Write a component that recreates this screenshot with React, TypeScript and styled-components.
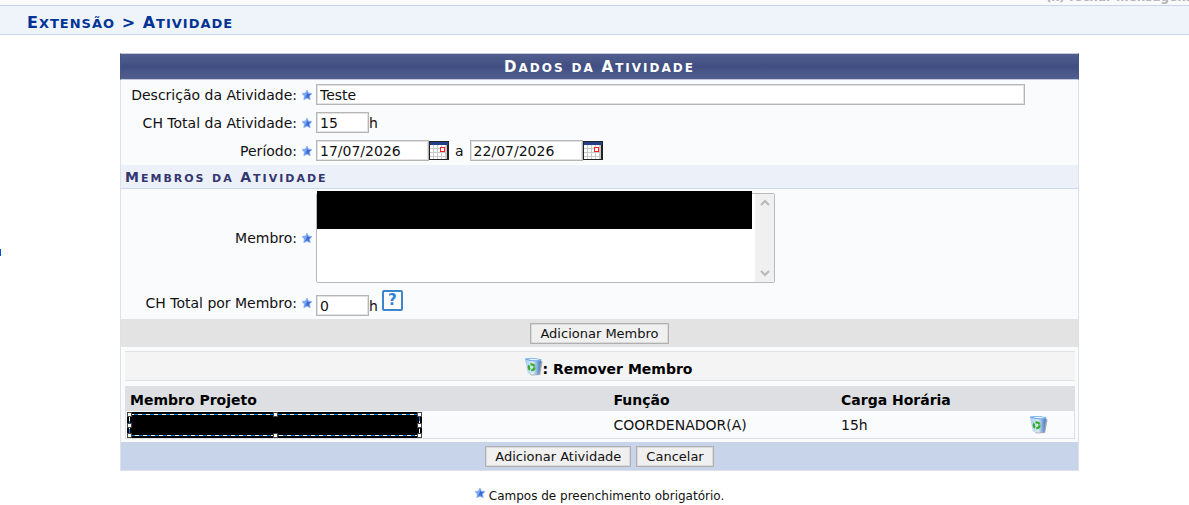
import React, { useId } from "react";
import styled, { createGlobalStyle } from "styled-components";

const GlobalStyle = createGlobalStyle`
  * { box-sizing: border-box; }
  body {
    margin: 0;
    background: #fff;
    color: #111;
    font: 14px/16px Verdana, "DejaVu Sans", sans-serif;
  }
  button, input, select { font: inherit; color: inherit; }
`;

const MessageStrip = styled.div`
  display: flex;
  justify-content: flex-end;
  align-items: flex-end;
  height: 5px;
  padding-bottom: 1px;
  overflow: hidden;
  background: #f9fafb;
`;

const CloseLink = styled.a`
  flex: none;
  width: 143px;
  color: #b4b4b4;
  font-size: 12px;
  font-weight: bold;
  line-height: 14px;
  white-space: nowrap;
  text-decoration: none;
`;

const LowerWord = styled.span<{ $small: number }>`
  font-size: ${(p) => p.$small}px;
  text-transform: uppercase;
`;

const Word = styled(LowerWord)`
  display: inline-block;

  &::first-letter { font-size: ${(p) => p.$small + 3}px; }
`;

const Breadcrumb = styled.h2`
  margin: 0;
  padding: 0 27px;
  height: 30px;
  border: solid #c8d5ec;
  border-width: 1px 0;
  background: #eff3fa;
  color: #003395;
  font-size: 16px;
  line-height: 34px;
  letter-spacing: 1px;
`;

const SideMark = styled.span`
  position: absolute;
  left: 0;
  top: 249px;
  width: 1px;
  height: 7px;
  background: #0050d0;
`;

const Main = styled.main`
  padding: 18px 110px 0 120px;
`;

const Panel = styled.form`
  border: 1px solid #dfe1e8;
  background: #fafbfd;
`;

const PanelTitle = styled.h3`
  margin: -1px;
  height: 27px;
  border: 1px solid #c4c8d8;
  border-left-color: #475486;
  border-right-color: #475486;
  background: linear-gradient(#515f8f, #414e82 50%, #515f8f);
  color: #fff;
  font-size: 14px;
  line-height: 26px;
  text-align: center;
  letter-spacing: 2px;
`;

const Fields = styled.div<{ $pad: string }>`
  display: flex;
  flex-direction: column;
  gap: 7px;
  padding: ${(p) => p.$pad};
`;

const Row = styled.div`
  display: flex;
  align-items: center;
`;

const Label = styled.label`
  flex: none;
  width: 176px;
  text-align: right;
  white-space: nowrap;
`;

const StarSlot = styled.span`
  flex: none;
  display: flex;
  width: 19px;
  padding-left: 5px;
`;

const Controls = styled.div`
  display: flex;
  flex: 1;
  align-items: flex-end;
`;

const TextInput = styled.input<{ $width: string }>`
  width: ${(p) => p.$width};
  height: 21px;
  padding: 0 3px;
  border: 1px solid #b5b5b5;
  border-radius: 0;
  box-shadow: inset 0 0 0 1px #e2e2e2;
  background: #fff;
`;

const Unit = styled.span`
  line-height: 19px;
`;

const Between = styled(Unit)`
  padding: 0 6px;
`;

const IconButton = styled.button`
  display: flex;
  flex: none;
  margin: 0;
  padding: 0;
  border: 0;
  background: none;
`;

const DateButton = styled(IconButton)`
  align-self: center;
`;

const HelpButton = styled.button`
  width: 21px;
  height: 21px;
  margin: 0 0 5px 4px;
  padding: 0;
  border: 2px solid #3d86cc;
  border-radius: 2px;
  background: #fff;
  color: #2f80d8;
  font-size: 15px;
  font-weight: bold;
  line-height: 17px;
`;

const SectionTitle = styled.h4`
  margin: 0;
  padding: 0 4px;
  height: 24px;
  border-bottom: 1px solid #c8d9ee;
  background: #ecf0f8;
  color: #33366f;
  font-size: 13px;
  line-height: 24px;
  letter-spacing: 2px;
`;

const ListFrame = styled.div`
  position: relative;
  display: flex;
  width: 459px;
  height: 90px;
  border: 1px solid #b9b9b9;
  border-radius: 2px;
  background: #fff;
`;

const ListBox = styled.select`
  flex: 1;
  border: 0;
  background: #fff;
  appearance: none;
  overflow: hidden;
`;

const ScrollTrack = styled.span`
  display: flex;
  flex-direction: column;
  justify-content: space-between;
  align-items: center;
  width: 19px;
  padding: 5px 0;
  background: #f0f0f0;
`;

const ListMask = styled.span`
  position: absolute;
  left: 0;
  top: -3px;
  width: 435px;
  height: 38px;
  background: #000;
`;

const ActionBar = styled.div<{ $tone: string }>`
  display: flex;
  justify-content: center;
  gap: 5px;
  padding: 4px 0 3px;
  background: ${(p) => p.$tone};
`;

const ActionButton = styled.button`
  height: 21px;
  padding: 0 9px;
  border: 1px solid #b0b0b0;
  box-shadow: inset 0 0 0 1px #dadada;
  background: #f0f0f0;
  font-size: 13px;
`;

const Members = styled.section`
  padding: 4px 3px 3px 4px;
`;

const Legend = styled.div`
  display: flex;
  justify-content: center;
  align-items: center;
  height: 30px;
  margin-bottom: 5px;
  padding-left: 16px;
  border: solid #e2e2e2;
  border-width: 1px 0;
  background: #f4f4f4;
  color: #000;
  font-weight: bold;

  span { padding-top: 6px; }
`;

const MemberTable = styled.table`
  width: 100%;
  border: 1px solid #dedfe3;
  border-collapse: separate;
  border-spacing: 0;
  table-layout: fixed;

  th {
    height: 24px;
    padding: 1px 4px 0;
    background: #dedfe3;
    color: #000;
    text-align: left;
  }
  td {
    height: 27px;
    padding: 0 4px;
  }
  td:first-child { padding: 1px 0 0 1px; vertical-align: bottom; }
  td:last-child { padding: 0 2px; }
`;

const Col = styled.col<{ $width: string }>`
  width: ${(p) => p.$width};
`;

const Note = styled.p`
  display: flex;
  justify-content: center;
  gap: 4px;
  margin: 17px 0 0;
  font-size: 12px;
  line-height: 17px;
`;

const Block = styled.svg`
  display: block;
  flex: none;
`;

function SmallCaps({ text, small }: { text: string; small: number }) {
  return (
    <>
      {text.split(" ").map((word, i) => (
        <React.Fragment key={i}>
          {i > 0 && " "}
          {/^[a-z]/.test(word) ? (
            <LowerWord $small={small}>{word}</LowerWord>
          ) : (
            <Word $small={small}>{word}</Word>
          )}
        </React.Fragment>
      ))}
    </>
  );
}

function Star() {
  return (
    <Block width="10" height="10" viewBox="0 0 10 10" aria-hidden="true">
      <path d="M5 0 6.4 3 10 3.5 7.6 6 8.2 9.7 5 8.2 1.8 9.7 2.3 6 0 3.5 3.5 3Z" fill="#7ba6f0" stroke="#7ba6f0" strokeWidth="0.6" />
      <path d="M5.3 2.5 6.2 4.1 9 4 6.8 6 7.5 8.8 5 7.3 2.7 8.5 4.2 6Z" fill="#3a6ad4" />
    </Block>
  );
}

function Calendar() {
  return (
    <Block width="20" height="19" viewBox="0 0 20 19" shapeRendering="crispEdges" aria-hidden="true">
      <rect width="20" height="19" fill="#222" />
      <rect x="1" y="1" width="18" height="3" fill="#203f86" />
      <rect x="1" y="4" width="17" height="14" fill="#c9c9c9" />
      {[1, 5, 9, 13].map((x) =>
        [4, 8, 12, 16].map((y) => (
          <rect key={`${x}-${y}`} x={x} y={y} width="3" height={y === 16 ? 2 : 3} fill="#fff" />
        ))
      )}
      <rect x="11" y="6" width="5" height="5" fill="#f21d25" />
      <rect x="12" y="7" width="3" height="3" fill="#fff" />
    </Block>
  );
}

function RecycleBin() {
  const id = useId();
  return (
    <Block width="19" height="19" viewBox="0 0 20 20" aria-hidden="true">
      <defs>
        <linearGradient id={id}>
          <stop offset="0" stopColor="#a9cbed" />
          <stop offset="0.5" stopColor="#dcecf9" />
          <stop offset="1" stopColor="#3873b9" />
        </linearGradient>
      </defs>
      <path d="M5 17 8 19.5 17 19 19.5 5 17 3Z" fill="#6d7885" opacity="0.6" />
      <path d="M1 2 18 3 16 18 Q10 20 4 17Z" fill={`url(#${id})`} />
      <path d="M1 1.5 Q9 0 18.5 2.5 L17.5 4.5 Q9 5.5 1.5 3Z" fill="#6faae8" />
      <path d="M4 2.2 Q10 1 16.5 3 Q9 4.4 4 2.2Z" fill="#e8f5ff" />
      <circle cx="8" cy="10.8" r="3" fill="none" stroke="#35ad2e" strokeWidth="2.4" strokeDasharray="5 1.28" />
    </Block>
  );
}

function Chevron({ up }: { up?: boolean }) {
  return (
    <Block width="10" height="7" viewBox="0 0 10 7" aria-hidden="true">
      <path d={up ? "M1 6 5 2 9 6" : "M1 1 5 5 9 1"} fill="none" stroke="#b8b8b8" strokeWidth="2" />
    </Block>
  );
}

function SelectedMask() {
  return (
    <Block width="295" height="26" viewBox="0 0 295 26" shapeRendering="crispEdges" aria-hidden="true">
      <rect width="295" height="26" fill="#000" />
      <rect x="2.5" y="2.5" width="290" height="21" fill="none" stroke="#0878d8" />
      <rect x="2.5" y="2.5" width="290" height="21" fill="none" stroke="#fff" strokeDasharray="4 4" />
      {[0, 146, 290].map((x) =>
        [0, 11, 21].map((y) =>
          x === 146 && y === 11 ? null : (
            <React.Fragment key={`${x}-${y}`}>
              <rect x={x} y={y} width="5" height="5" fill="#444" />
              <rect x={x + 1} y={y + 1} width="3" height="3" fill="#fff" />
            </React.Fragment>
          )
        )
      )}
    </Block>
  );
}

function Field({ id, label, children }: { id: string; label: string; children: React.ReactNode }) {
  return (
    <Row>
      <Label htmlFor={id}>{label}</Label>
      <StarSlot><Star /></StarSlot>
      <Controls>{children}</Controls>
    </Row>
  );
}

export default function App() {
  return (
    <>
      <GlobalStyle />
      <MessageStrip><CloseLink href="#">(x) fechar mensagens</CloseLink></MessageStrip>
      <Breadcrumb><SmallCaps text="Extensão > Atividade" small={13} /></Breadcrumb>
      <SideMark />
      <Main>
        <Panel onSubmit={(e) => e.preventDefault()}>
          <PanelTitle><SmallCaps text="Dados da Atividade" small={12} /></PanelTitle>
          <Fields $pad="5px 0 4px">
            <Field id="descricao" label="Descrição da Atividade:">
              <TextInput id="descricao" $width="calc(100% - 53px)" defaultValue="Teste" />
            </Field>
            <Field id="ch" label="CH Total da Atividade:">
              <TextInput id="ch" $width="53px" defaultValue="15" /><Unit>h</Unit>
            </Field>
            <Field id="inicio" label="Período:">
              <TextInput id="inicio" $width="113px" defaultValue="17/07/2026" />
              <DateButton type="button" aria-label="Data inicial"><Calendar /></DateButton>
              <Between>a</Between>
              <TextInput $width="113px" aria-label="Data final" defaultValue="22/07/2026" />
              <DateButton type="button" aria-label="Data final"><Calendar /></DateButton>
            </Field>
          </Fields>
          <SectionTitle><SmallCaps text="Membros da Atividade" small={11} /></SectionTitle>
          <Fields $pad="4px 0 3px">
            <Field id="membro" label="Membro:">
              <ListFrame>
                <ListBox id="membro" size={5} />
                <ScrollTrack><Chevron up /><Chevron /></ScrollTrack>
                <ListMask />
              </ListFrame>
            </Field>
            <Field id="chMembro" label="CH Total por Membro:">
              <TextInput id="chMembro" $width="53px" defaultValue="0" /><Unit>h</Unit>
              <HelpButton type="button">?</HelpButton>
            </Field>
          </Fields>
          <ActionBar $tone="#e3e3e3"><ActionButton type="button">Adicionar Membro</ActionButton></ActionBar>
          <Members>
            <Legend><RecycleBin /><span>: Remover Membro</span></Legend>
            <MemberTable>
              <colgroup>
                <Col $width="51%" /><Col $width="24%" /><Col $width="20%" /><Col $width="5%" />
              </colgroup>
              <thead>
                <tr><th>Membro Projeto</th><th>Função</th><th>Carga Horária</th><th /></tr>
              </thead>
              <tbody>
                <tr>
                  <td><SelectedMask /></td>
                  <td>COORDENADOR(A)</td>
                  <td>15h</td>
                  <td><IconButton type="button" aria-label="Remover Membro"><RecycleBin /></IconButton></td>
                </tr>
              </tbody>
            </MemberTable>
          </Members>
          <ActionBar $tone="#c8d4ea">
            <ActionButton type="submit">Adicionar Atividade</ActionButton>
            <ActionButton type="button">Cancelar</ActionButton>
          </ActionBar>
        </Panel>
        <Note><Star />Campos de preenchimento obrigatório.</Note>
      </Main>
    </>
  );
}
